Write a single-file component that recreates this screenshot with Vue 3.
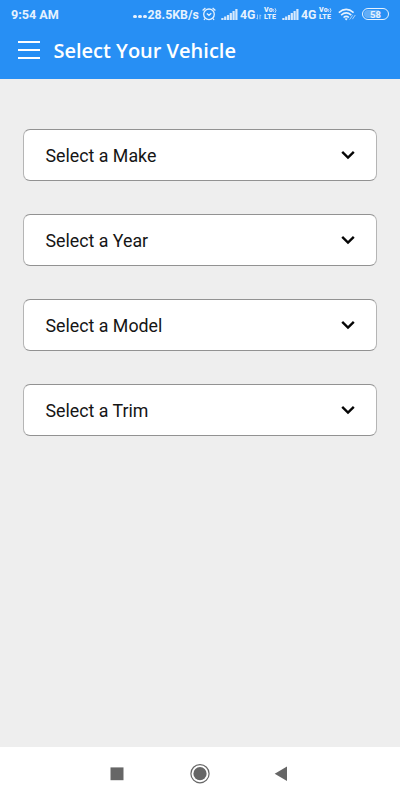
<script setup>
const fields = ['Make', 'Year', 'Model', 'Trim']
</script>

<template>
  <div class="screen">
    <header class="top">
      <div class="status">
        <span class="time">9:54 AM</span>
        <span class="dots"><i></i><i></i><i></i></span>
        <span class="speed">28.5KB/s</span>
        <svg class="alarm" width="14" height="14" viewBox="0 0 14 14">
          <circle cx="7" cy="7.3" r="5.3" />
          <path d="M4.8 6.4 7 8.3l2.3-2M.6 3.5 3.4 1.1M13.4 3.5l-2.8-2.4M3 11.5l-1 1.5M11 11.5l1 1.5" />
        </svg>
        <svg class="signal" width="17" height="12" viewBox="0 0 17 12">
          <path d="M.3 10h2.2v2H.3zM3.1 8.6h2.2V12H3.1zM5.9 6.9h2.2V12H5.9zM8.7 5h2.2v7H8.7zM11.5 3h2.2v9h-2.2zM14.3.9h2.2V12h-2.2z" />
        </svg>
        <span class="net">4G</span>
        <svg class="arrows" width="6" height="6" viewBox="0 0 6 6">
          <path d="M1.5.5v4.7M.4 4l1.1 1.2M4 5.3V.8L5.2 2" />
        </svg>
        <span class="volte"><b>Vo<svg width="4" height="7" viewBox="0 0 4 7"><path d="M.4 2.2q1 1.3 0 2.6M2 1.2q2 2.3 0 4.6" /></svg></b><b>LTE</b></span>
        <svg class="signal second" width="17" height="12" viewBox="0 0 17 12">
          <path d="M.3 10h2.2v2H.3zM3.1 8.6h2.2V12H3.1zM5.9 6.9h2.2V12H5.9zM8.7 5h2.2v7H8.7zM11.5 3h2.2v9h-2.2zM14.3.9h2.2V12h-2.2z" />
        </svg>
        <span class="net later">4G</span>
        <span class="volte wide"><b>Vo<svg width="4" height="7" viewBox="0 0 4 7"><path d="M.4 2.2q1 1.3 0 2.6M2 1.2q2 2.3 0 4.6" /></svg></b><b>LTE</b></span>
        <svg class="wifi" width="19" height="13" viewBox="0 0 19 13">
          <path d="M.8 4.6Q8.2-1.8 15.6 4.6M3.1 7.1q5.1-4.4 10.2 0M5.5 9.5q2.7-2.3 5.4 0" />
          <path class="dot" d="M6.6 10.7q1.6-1.1 3.2 0l-1.6 1.7z" />
          <path class="thin" d="m11.6 11.6 3-4.2M14.4 11.2 17.3 7" />
        </svg>
        <span class="battery"><span class="level">58</span></span>
      </div>
      <div class="bar">
        <button class="menu" aria-label="Menu"><i></i><i></i><i></i></button>
        <h1>Select Your Vehicle</h1>
      </div>
    </header>

    <main class="form">
      <button v-for="field in fields" :key="field" class="select">
        <span>Select a {{ field }}</span>
        <svg width="14" height="10" viewBox="0 0 14 10"><path d="m1.2 1.9 5.8 5.6 5.8-5.6" /></svg>
      </button>
    </main>

    <nav class="nav">
      <svg width="14" height="14" viewBox="0 0 14 14"><path d="M.5.4h13v12.8H.5z" /></svg>
      <svg width="20" height="20" viewBox="0 0 20 20">
        <circle cx="10" cy="9.7" r="9.1" class="ring" />
        <circle cx="10" cy="9.7" r="6.6" />
      </svg>
      <svg width="14" height="16" viewBox="0 0 14 16"><path d="M.7 7.8 13 .5v14.6z" /></svg>
    </nav>
  </div>
</template>

<style>
body {
  background: #eee;
}
</style>

<style scoped>
.screen {
  display: flex;
  flex-direction: column;
  width: 400px;
  height: 800px;
  overflow: hidden;
  background: #eee;
  font-family: Roboto, sans-serif;
}
svg {
  display: block;
  flex: none;
}
button {
  margin: 0;
  padding: 0;
  border: 0;
  background: none;
  font: inherit;
}
.top {
  flex: none;
  height: 79px;
  background: #278ff4;
  color: #fff;
}
.status {
  display: flex;
  align-items: center;
  height: 28px;
  padding-left: 11px;
  color: #e6f2fe;
  font-size: 12.3px;
  font-weight: 700;
  line-height: 14px;
  white-space: nowrap;
}
.status > * {
  flex: none;
}
.time {
  width: 122px;
  margin-top: 1px;
  font-size: 12.6px;
}
.dots {
  display: flex;
  gap: 1.5px;
  width: 14.5px;
  margin-top: 5px;
}
.dots i {
  width: 3.5px;
  height: 3.5px;
  border-radius: 50%;
  background: #e6f2fe;
}
.speed {
  width: 54.5px;
  margin-top: 1px;
}
.alarm {
  fill: none;
  stroke: #e6f2fe;
  stroke-width: 1.3;
}
.signal {
  margin-left: 5px;
  fill: #d6e9fd;
}
.net {
  width: 15px;
  margin: 1px 0 0 2px;
}
.arrows {
  margin: 6px 0 0 1px;
  fill: none;
  stroke: #b9dafb;
  stroke-width: .8;
}
.volte {
  display: flex;
  flex-direction: column;
  width: 13px;
  margin-left: 2px;
  font-size: 7px;
  letter-spacing: .2px;
  line-height: 7px;
}
.volte b {
  display: flex;
  height: 7px;
}
.volte path {
  fill: none;
  stroke: #e6f2fe;
  stroke-width: .8;
}
.second {
  margin-left: 5px;
}
.later {
  margin-left: 2px;
}
.wide {
  margin-left: 3px;
}
.wifi {
  margin-left: 6px;
  fill: none;
  stroke: #e6f2fe;
  stroke-width: 1.5;
}
.wifi .dot {
  fill: #e6f2fe;
  stroke: none;
}
.wifi .thin {
  stroke: #b9dafb;
  stroke-width: .9;
}
.battery {
  box-sizing: border-box;
  width: 27px;
  height: 12px;
  margin-left: 5px;
  padding: 1px;
  border: 1px solid #e6f2fe;
  border-radius: 6px;
}
.level {
  display: block;
  height: 8px;
  border-radius: 4px;
  background: linear-gradient(90deg, #62adf7 65%, transparent 65%);
  font-size: 9.5px;
  line-height: 9px;
  text-align: center;
}
.bar {
  display: flex;
  align-items: center;
  height: 43px;
  padding-left: 17.5px;
}
.menu {
  display: flex;
  flex-direction: column;
  gap: 6px;
  width: 22.5px;
}
.menu i {
  height: 2px;
  background: #fff;
}
h1 {
  margin: 2px 0 0 13.4px;
  font-family: "Open Sans", sans-serif;
  font-size: 20px;
  font-weight: 600;
  line-height: 26px;
  white-space: nowrap;
}
.form {
  display: flex;
  flex: 1;
  flex-direction: column;
  gap: 33px;
  padding: 50px 23px 0;
}
.select {
  display: flex;
  align-items: center;
  justify-content: space-between;
  box-sizing: border-box;
  height: 52px;
  padding: 1px 22px 0;
  border: 1px solid #929292;
  border-right-color: #b5b5b5;
  border-left-color: #b5b5b5;
  border-radius: 7px;
  background: #fff;
  color: #151515;
  font-size: 17.8px;
  line-height: 22px;
}
.select span {
  margin-left: -.5px;
}
.select svg {
  margin: -2px -1px 0 0;
}
.select path {
  fill: none;
  stroke: #050505;
  stroke-width: 2.4;
}
.nav {
  display: flex;
  align-items: center;
  gap: 66px;
  flex: none;
  height: 53px;
  padding-left: 110px;
  background: #fff;
  fill: #666;
}
.nav svg:last-child {
  margin-left: -2px;
}
.ring {
  fill: none;
  stroke: #666;
  stroke-width: 1.2;
}
</style>
